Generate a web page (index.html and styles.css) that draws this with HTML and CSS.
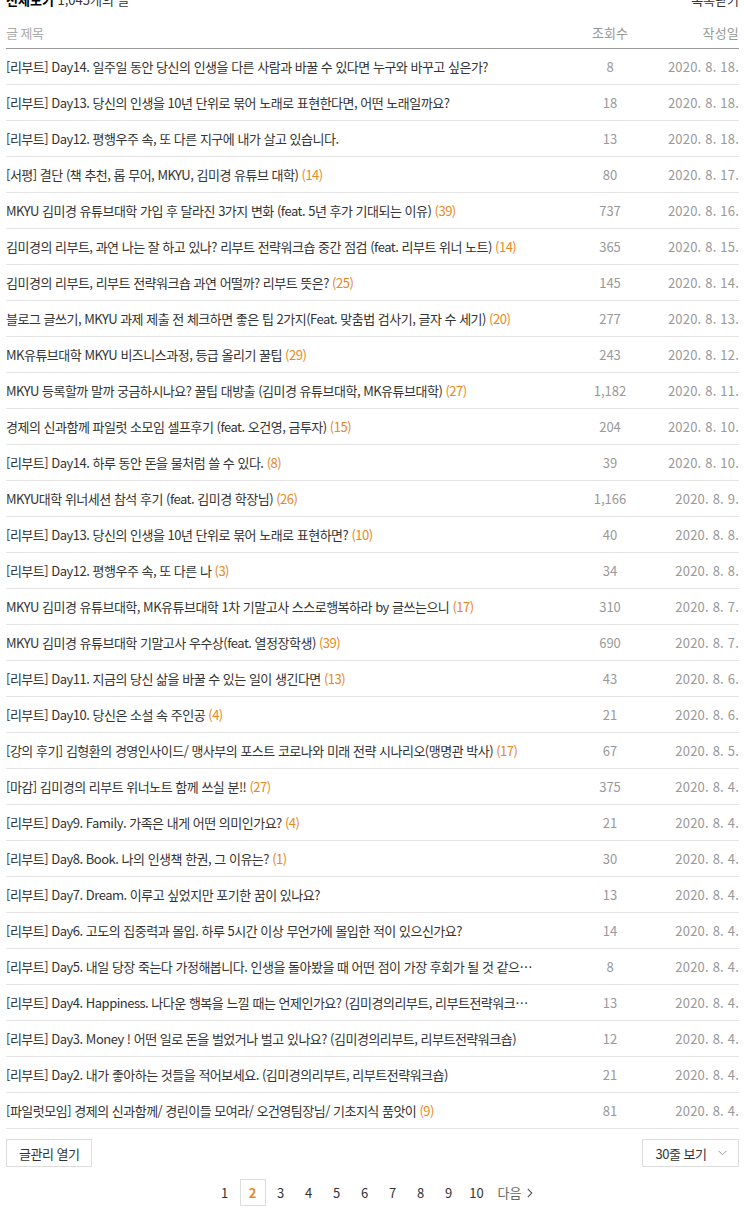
FILE: index.html
```html
<!DOCTYPE html>
<html lang="ko">
<head>
  <meta charset="UTF-8">
  <meta name="viewport" content="width=device-width, initial-scale=1.0">
  <title>전체보기 - 글 목록</title>
  <link rel="stylesheet" href="styles.css">
</head>
<body>
  <div class="board">
    <div class="board-top">
      <h2><strong>전체보기</strong> 1,045개의 글</h2>
      <a class="toggle-list">목록닫기</a>
    </div>

    <table class="post-list">
      <colgroup>
        <col>
        <col class="col-hit">
        <col class="col-date">
      </colgroup>
      <thead>
        <tr>
          <th class="title">글 제목</th>
          <th class="hit">조회수</th>
          <th class="date">작성일</th>
        </tr>
      </thead>
      <tbody>
        <tr><td class="title"><span>[리부트] Day14. 일주일 동안 당신의 인생을 다른 사람과 바꿀 수 있다면 누구와 바꾸고 싶은가?</span></td><td class="hit">8</td><td class="date">2020. 8. 18.</td></tr>
        <tr><td class="title"><span>[리부트] Day13. 당신의 인생을 10년 단위로 묶어 노래로 표현한다면, 어떤 노래일까요?</span></td><td class="hit">18</td><td class="date">2020. 8. 18.</td></tr>
        <tr><td class="title"><span>[리부트] Day12. 평행우주 속, 또 다른 지구에 내가 살고 있습니다.</span></td><td class="hit">13</td><td class="date">2020. 8. 18.</td></tr>
        <tr><td class="title"><span>[서평] 결단 (책 추천, 롭 무어, MKYU, 김미경 유튜브 대학) <em class="cmt">(14)</em></span></td><td class="hit">80</td><td class="date">2020. 8. 17.</td></tr>
        <tr><td class="title"><span>MKYU 김미경 유튜브대학 가입 후 달라진 3가지 변화 (feat. 5년 후가 기대되는 이유) <em class="cmt">(39)</em></span></td><td class="hit">737</td><td class="date">2020. 8. 16.</td></tr>
        <tr><td class="title"><span>김미경의 리부트, 과연 나는 잘 하고 있나? 리부트 전략워크숍 중간 점검 (feat. 리부트 위너 노트) <em class="cmt">(14)</em></span></td><td class="hit">365</td><td class="date">2020. 8. 15.</td></tr>
        <tr><td class="title"><span>김미경의 리부트, 리부트 전략워크숍 과연 어떨까? 리부트 뜻은? <em class="cmt">(25)</em></span></td><td class="hit">145</td><td class="date">2020. 8. 14.</td></tr>
        <tr><td class="title"><span>블로그 글쓰기, MKYU 과제 제출 전 체크하면 좋은 팁 2가지(Feat. 맞춤법 검사기, 글자 수 세기) <em class="cmt">(20)</em></span></td><td class="hit">277</td><td class="date">2020. 8. 13.</td></tr>
        <tr><td class="title"><span>MK유튜브대학 MKYU 비즈니스과정, 등급 올리기 꿀팁 <em class="cmt">(29)</em></span></td><td class="hit">243</td><td class="date">2020. 8. 12.</td></tr>
        <tr><td class="title"><span>MKYU 등록할까 말까 궁금하시나요? 꿀팁 대방출 (김미경 유튜브대학, MK유튜브대학) <em class="cmt">(27)</em></span></td><td class="hit">1,182</td><td class="date">2020. 8. 11.</td></tr>
        <tr><td class="title"><span>경제의 신과함께 파일럿 소모임 셀프후기 (feat. 오건영, 금투자) <em class="cmt">(15)</em></span></td><td class="hit">204</td><td class="date">2020. 8. 10.</td></tr>
        <tr><td class="title"><span>[리부트] Day14. 하루 동안 돈을 물처럼 쓸 수 있다. <em class="cmt">(8)</em></span></td><td class="hit">39</td><td class="date">2020. 8. 10.</td></tr>
        <tr><td class="title"><span>MKYU대학 위너세션 참석 후기 (feat. 김미경 학장님) <em class="cmt">(26)</em></span></td><td class="hit">1,166</td><td class="date">2020. 8. 9.</td></tr>
        <tr><td class="title"><span>[리부트] Day13. 당신의 인생을 10년 단위로 묶어 노래로 표현하면? <em class="cmt">(10)</em></span></td><td class="hit">40</td><td class="date">2020. 8. 8.</td></tr>
        <tr><td class="title"><span>[리부트] Day12. 평행우주 속, 또 다른 나 <em class="cmt">(3)</em></span></td><td class="hit">34</td><td class="date">2020. 8. 8.</td></tr>
        <tr><td class="title"><span>MKYU 김미경 유튜브대학, MK유튜브대학 1차 기말고사 스스로행복하라 by 글쓰는으니 <em class="cmt">(17)</em></span></td><td class="hit">310</td><td class="date">2020. 8. 7.</td></tr>
        <tr><td class="title"><span>MKYU 김미경 유튜브대학 기말고사 우수상(feat. 열정장학생) <em class="cmt">(39)</em></span></td><td class="hit">690</td><td class="date">2020. 8. 7.</td></tr>
        <tr><td class="title"><span>[리부트] Day11. 지금의 당신 삶을 바꿀 수 있는 일이 생긴다면 <em class="cmt">(13)</em></span></td><td class="hit">43</td><td class="date">2020. 8. 6.</td></tr>
        <tr><td class="title"><span>[리부트] Day10. 당신은 소설 속 주인공 <em class="cmt">(4)</em></span></td><td class="hit">21</td><td class="date">2020. 8. 6.</td></tr>
        <tr><td class="title"><span>[강의 후기] 김형환의 경영인사이드/ 맹사부의 포스트 코로나와 미래 전략 시나리오(맹명관 박사) <em class="cmt">(17)</em></span></td><td class="hit">67</td><td class="date">2020. 8. 5.</td></tr>
        <tr><td class="title"><span>[마감] 김미경의 리부트 위너노트 함께 쓰실 분!! <em class="cmt">(27)</em></span></td><td class="hit">375</td><td class="date">2020. 8. 4.</td></tr>
        <tr><td class="title"><span>[리부트] Day9. Family. 가족은 내게 어떤 의미인가요? <em class="cmt">(4)</em></span></td><td class="hit">21</td><td class="date">2020. 8. 4.</td></tr>
        <tr><td class="title"><span>[리부트] Day8. Book. 나의 인생책 한권, 그 이유는? <em class="cmt">(1)</em></span></td><td class="hit">30</td><td class="date">2020. 8. 4.</td></tr>
        <tr><td class="title"><span>[리부트] Day7. Dream. 이루고 싶었지만 포기한 꿈이 있나요?</span></td><td class="hit">13</td><td class="date">2020. 8. 4.</td></tr>
        <tr><td class="title"><span>[리부트] Day6. 고도의 집중력과 몰입. 하루 5시간 이상 무언가에 몰입한 적이 있으신가요?</span></td><td class="hit">14</td><td class="date">2020. 8. 4.</td></tr>
        <tr><td class="title"><span>[리부트] Day5. 내일 당장 죽는다 가정해봅니다. 인생을 돌아봤을 때 어떤 점이 가장 후회가 될 것 같으신가요?</span></td><td class="hit">8</td><td class="date">2020. 8. 4.</td></tr>
        <tr><td class="title"><span>[리부트] Day4. Happiness. 나다운 행복을 느낄 때는 언제인가요? (김미경의리부트, 리부트전략워크숍, 리부트위너노트)</span></td><td class="hit">13</td><td class="date">2020. 8. 4.</td></tr>
        <tr><td class="title"><span>[리부트] Day3. Money ! 어떤 일로 돈을 벌었거나 벌고 있나요? (김미경의리부트, 리부트전략워크숍)</span></td><td class="hit">12</td><td class="date">2020. 8. 4.</td></tr>
        <tr><td class="title"><span>[리부트] Day2. 내가 좋아하는 것들을 적어보세요. (김미경의리부트, 리부트전략워크숍)</span></td><td class="hit">21</td><td class="date">2020. 8. 4.</td></tr>
        <tr><td class="title"><span>[파일럿모임] 경제의 신과함께/ 경린이들 모여라/ 오건영팀장님/ 기초지식 품앗이 <em class="cmt">(9)</em></span></td><td class="hit">81</td><td class="date">2020. 8. 4.</td></tr>
      </tbody>
    </table>

    <div class="board-tools">
      <button class="btn">글관리 열기</button>
      <button class="btn select">30줄 보기
        <svg width="9" height="6" viewBox="0 0 9 6"><path d="M0.5 0.8 L4.5 4.8 L8.5 0.8" fill="none" stroke="#999" stroke-width="1"/></svg>
      </button>
    </div>

    <div class="paging">
      <a>1</a>
      <a class="on">2</a>
      <a>3</a>
      <a>4</a>
      <a>5</a>
      <a>6</a>
      <a>7</a>
      <a>8</a>
      <a>9</a>
      <a>10</a>
      <a class="next">다음
        <svg width="6" height="10" viewBox="0 0 6 10"><path d="M0.8 0.8 L4.8 5 L0.8 9.2" fill="none" stroke="#555" stroke-width="1.1"/></svg>
      </a>
    </div>
  </div>
</body>
</html>
```

FILE: styles.css
```css
body {
  margin: 0;
  font-family: "Noto Sans CJK KR", "Noto Sans", sans-serif;
  font-size: 13px;
  color: #333;
  background: #fff;
}
.board {
  padding: 0 5px 0 6px;
}
.board-top {
  display: flex;
  justify-content: space-between;
  align-items: center;
  height: 24px;
  margin-top: -13px;
}
.board-top h2 {
  margin: 0;
  font-size: 13px;
  font-weight: normal;
  color: #333;
}
.board-top h2 strong {
  color: #000;
}
.toggle-list {
  font-size: 13px;
  color: #333;
}
.post-list {
  width: 100%;
  border-collapse: collapse;
  table-layout: fixed;
}
.col-hit {
  width: 70px;
}
.col-date {
  width: 94px;
}
.post-list th {
  font-weight: normal;
  color: #aaa;
  line-height: 18px;
  padding: 13px 0 6px;
  border-bottom: 1px solid #999;
}
.post-list td {
  line-height: 19px;
  padding: 8px 0;
  border-bottom: 1px solid #e5e5e5;
}
.post-list .title {
  text-align: left;
  padding-right: 38px;
  letter-spacing: -0.5px;
}
.post-list td.title span {
  display: block;
  white-space: nowrap;
  overflow: hidden;
  text-overflow: ellipsis;
  color: #333;
}
.post-list .hit {
  text-align: center;
  color: #999;
}
.post-list .date {
  text-align: right;
  color: #999;
  letter-spacing: 0.2px;
}
.cmt {
  font-style: normal;
  color: #e8891d;
}
.board-tools {
  display: flex;
  justify-content: space-between;
  margin-top: 10px;
}
.btn {
  display: inline-flex;
  align-items: center;
  justify-content: center;
  gap: 12px;
  height: 28px;
  padding: 0 12px;
  border: 1px solid #ddd;
  background: #fff;
  font-family: inherit;
  font-size: 13px;
  letter-spacing: -0.5px;
  color: #333;
}
.btn.select {
  width: 97px;
  padding: 0 10px 0 12px;
}
.paging {
  display: flex;
  justify-content: center;
  gap: 2px;
  margin-top: 12px;
  font-size: 13px;
}
.paging a {
  display: flex;
  align-items: center;
  justify-content: center;
  width: 26px;
  height: 27px;
  box-sizing: border-box;
  color: #333;
}
.paging a.on {
  border: 1px solid #ddd;
  color: #e8891d;
  font-weight: bold;
}
.paging a.next {
  width: auto;
  gap: 6px;
  margin-left: 6px;
  color: #666;
}
```
